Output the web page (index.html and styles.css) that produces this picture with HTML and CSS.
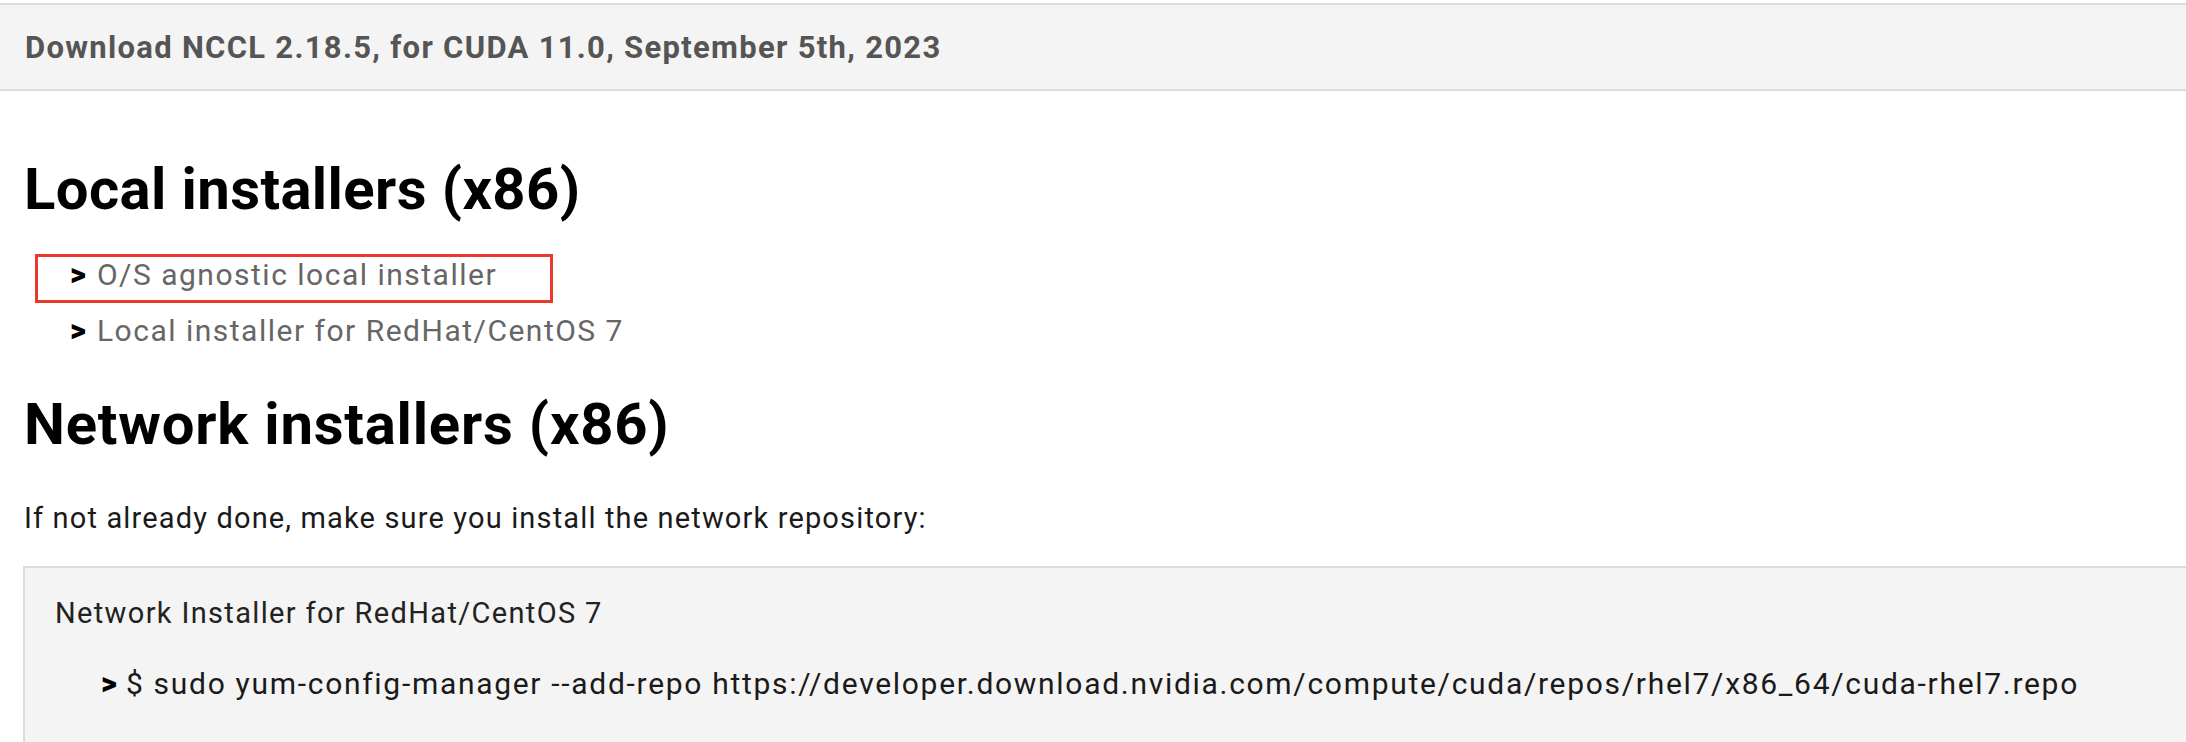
FILE: index.html
```html
<!DOCTYPE html>
<html lang="en">
<head>
<meta charset="utf-8">
<title>Download NCCL</title>
<link rel="stylesheet" href="styles.css">
</head>
<body>
<div class="header">Download NCCL 2.18.5, for CUDA 11.0, September 5th, 2023</div>
<main class="content">
  <h1 class="title">Local installers (x86)</h1>
  <ul class="item-list">
    <li class="item highlight"><span class="chev">&gt;</span><a class="link" href="#">O/S agnostic local installer</a></li>
    <li class="item"><span class="chev">&gt;</span><a class="link" href="#">Local installer for RedHat/CentOS 7</a></li>
  </ul>
  <h2 class="title title-net">Network installers (x86)</h2>
  <p class="para">If not already done, make sure you install the network repository:</p>
  <div class="code-box">
    <div class="code-title">Network Installer for RedHat/CentOS 7</div>
    <div class="code-line"><span class="chev">&gt;</span><span class="cmd">$ sudo yum-config-manager --add-repo https://developer.download.nvidia.com/compute/cuda/repos/rhel7/x86_64/cuda-rhel7.repo</span></div>
  </div>
</main>
</body>
</html>
```

FILE: styles.css
```css
html, body {
  margin: 0;
  padding: 0;
  background: #fff;
  overflow: hidden;
}
body {
  padding-top: 3px;
  font-family: Roboto, "Liberation Sans", sans-serif;
  color: #1a1a1a;
}
.header {
  display: flex;
  align-items: center;
  height: 84px;
  padding: 0 25px;
  background: #f4f4f4;
  border-top: 2px solid #dcdcdc;
  border-bottom: 2px solid #dcdcdc;
  font-size: 31px;
  letter-spacing: 1.3px;
  font-weight: 700;
  color: #555;
}
.content {
  padding-left: 24px;
}
.title {
  margin: 70px 0 0;
  font-size: 58px;
  line-height: 56px;
  letter-spacing: 0.4px;
  font-weight: 700;
  color: #000;
}
.title-net {
  margin-top: 37px;
  letter-spacing: 0.8px;
}
.item-list {
  list-style: none;
  margin: 30px 0 0;
  padding: 0 0 0 11px;
}
.item {
  position: relative;
  display: flex;
  align-items: baseline;
  height: 56px;
  line-height: 56px;
  padding-left: 35px;
  font-size: 30px;
}
.item.highlight::after {
  content: "";
  position: absolute;
  left: 0;
  top: 7px;
  bottom: 0;
  width: 518px;
  border: 3px solid #e8392b;
  box-sizing: border-box;
}
.chev {
  font-weight: 900;
  color: #000;
  font-size: 31px;
  margin-right: 11px;
}
.link {
  color: #666;
  text-decoration: none;
  letter-spacing: 1.5px;
}
.para {
  margin: 46px 0 0;
  font-size: 29px;
  line-height: 40px;
  letter-spacing: 1.15px;
  color: #1a1a1a;
}
.code-box {
  margin: 28px 0 0 -1px;
  width: 2400px;
  height: 300px;
  background: #f4f4f4;
  border-top: 2px solid #dcdcdc;
  border-left: 2px solid #dcdcdc;
  padding: 25px 0 0 30px;
  box-sizing: border-box;
}
.code-title {
  font-size: 29px;
  line-height: 40px;
  letter-spacing: 1.35px;
  color: #222;
}
.code-line {
  display: flex;
  align-items: baseline;
  margin-top: 31px;
  padding-left: 46px;
  font-size: 30px;
  line-height: 40px;
  color: #1a1a1a;
}
.code-line .chev {
  margin-right: 9px;
}
.cmd {
  letter-spacing: 1.7px;
}
```
